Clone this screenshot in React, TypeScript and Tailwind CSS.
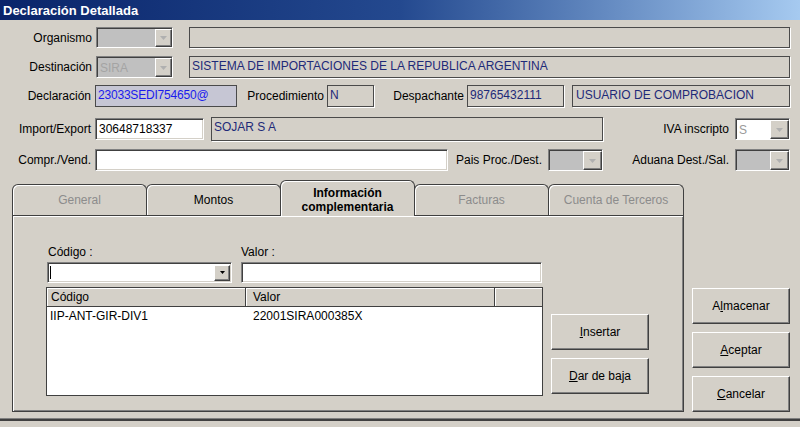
import React from "react";

const sunkenWhite =
  "bg-white border border-t-[#808080] border-l-[#808080] border-b-white border-r-white shadow-[inset_1px_1px_0_#404040,inset_-1px_-1px_0_#d4d0c8]";
const readOnly = "border border-[#4a4a4a] shadow-[1px_1px_0_#ffffff]";
const raised =
  "bg-[#d4d0c8] border border-t-white border-l-white border-b-[#404040] border-r-[#404040] shadow-[inset_-1px_-1px_0_#808080]";

function Arrow({ color }: { color: string }) {
  return (
    <svg width="7" height="4" viewBox="0 0 7 4">
      <path d="M0 0 H7 L3.5 4 Z" fill={color} />
    </svg>
  );
}

function DisabledCombo({
  fieldCls,
  text,
  textCls,
}: {
  fieldCls: string;
  text?: string;
  textCls?: string;
}) {
  return (
    <div className="flex h-full w-[77px] border border-t-[#808080] border-l-[#808080] border-b-white border-r-white shadow-[inset_1px_1px_0_#404040]">
      <div className={`flex-1 flex items-center pl-[2px] ml-[1px] mt-[1px] ${fieldCls} ${textCls ?? ""}`}>{text}</div>
      <div className={`w-[17px] mt-[1px] flex items-center justify-center ${raised}`}>
        <Arrow color="#b0b0b0" />
      </div>
    </div>
  );
}

function SmallCombo({ fieldCls, text, textCls }: { fieldCls: string; text?: string; textCls?: string }) {
  return (
    <div className="flex h-full w-[55px] border border-t-[#808080] border-l-[#808080] border-b-white border-r-white shadow-[inset_1px_1px_0_#404040]">
      <div className={`flex-1 flex items-center pl-[2px] ml-[1px] mt-[1px] ${fieldCls} ${textCls ?? ""}`}>{text}</div>
      <div className={`w-[19px] mt-[1px] flex items-center justify-center ${raised}`}>
        <Arrow color="#b0b0b0" />
      </div>
    </div>
  );
}

function Btn({ children, cls }: { children: React.ReactNode; cls: string }) {
  return (
    <div className={`w-[98px] h-[36px] flex items-center justify-center text-[12px] ${raised} ${cls}`}>
      {children}
    </div>
  );
}

export default function App() {
  const navy = "text-[#1e2a78]";
  return (
    <div className="w-[800px] h-[427px] bg-[#d4d0c8] overflow-hidden text-[12px] leading-none text-black font-['Liberation_Sans',Arial,sans-serif]">
      {/* title bar */}
      <div className="h-[20px] bg-gradient-to-r from-[#0a246a] via-[#24498f] to-[#a6caf0] flex items-center pl-[3px] text-white font-bold text-[13px]">
        Declaración Detallada
      </div>

      {/* row 1 */}
      <div className="flex items-center h-[21px] mt-[7px]">
        <div className="w-[92px] text-right">Organismo</div>
        <div className="ml-[4px] h-full">
          <DisabledCombo fieldCls="bg-[#c0c0c0]" />
        </div>
        <div className={`ml-[16px] w-[601px] h-full ${readOnly}`} />
      </div>

      {/* row 2 */}
      <div className="flex items-center h-[22px] mt-[8px]">
        <div className="w-[92px] text-right">Destinación</div>
        <div className="ml-[4px] h-full">
          <DisabledCombo fieldCls="bg-[#c0c0c0]" text="SIRA" textCls="text-[#a4a4a4]" />
        </div>
        <div className={`ml-[16px] w-[601px] h-full flex items-start pt-[3px] pl-[2px] ${readOnly} ${navy}`}>
          SISTEMA DE IMPORTACIONES DE LA REPUBLICA ARGENTINA
        </div>
      </div>

      {/* row 3 */}
      <div className="flex items-center h-[22px] mt-[7px]">
        <div className="w-[91px] text-right">Declaración</div>
        <div className="ml-[4px] w-[142px] h-full flex items-start pt-[3px] pl-[2px] bg-[#c6c6d4] border border-[#4a4a4a] text-[#1a1aee] tracking-[-0.2px]">
          23033SEDI754650@
        </div>
        <div className="w-[87px] text-right">Procedimiento</div>
        <div className={`ml-[3px] w-[47px] h-full flex items-start pt-[3px] pl-[2px] ${readOnly} ${navy}`}>N</div>
        <div className="w-[90px] text-right">Despachante</div>
        <div className={`ml-[3px] w-[97px] h-full flex items-start pt-[3px] pl-[2px] ${readOnly} ${navy}`}>98765432111</div>
        <div className={`ml-[8px] w-[218px] h-full flex items-start pt-[3px] pl-[3px] ${readOnly} ${navy}`}>
          USUARIO DE COMPROBACION
        </div>
      </div>

      {/* row 4 */}
      <div className="flex items-center h-[22px] mt-[11px]">
        <div className="w-[91px] text-right">Import/Export</div>
        <div className={`ml-[4px] w-[109px] h-full flex items-center pl-[3px] ${sunkenWhite}`}>30648718337</div>
        <div className={`ml-[7px] w-[392px] h-[24px] flex items-start pt-[3px] pl-[2px] ${readOnly} ${navy}`}>SOJAR S A</div>
        <div className="w-[126px] text-right">IVA inscripto</div>
        <div className="ml-[6px] h-full">
          <SmallCombo fieldCls="bg-white" text="S" textCls="text-[#9a9a9a]" />
        </div>
      </div>

      {/* row 5 */}
      <div className="flex items-center h-[22px] mt-[9px]">
        <div className="w-[91px] text-right">Compr./Vend.</div>
        <div className={`ml-[4px] w-[353px] h-full ${sunkenWhite}`} />
        <div className="w-[94px] text-right">Pais Proc./Dest.</div>
        <div className="ml-[6px] h-full">
          <SmallCombo fieldCls="bg-[#c0c0c0]" />
        </div>
        <div className="w-[126px] text-right">Aduana Dest./Sal.</div>
        <div className="ml-[6px] h-full">
          <SmallCombo fieldCls="bg-[#c0c0c0]" />
        </div>
      </div>

      {/* lower area */}
      <div className="flex items-end mt-[10px]">
        <div className="ml-[12px] w-[672px] flex flex-col">
          {/* tabs */}
          <div className="flex items-end h-[34px]">
            <div className="w-[135px] h-[31px] border border-b-0 border-[#404040] rounded-t-[6px] shadow-[inset_1px_1px_0_#ffffff] flex items-center justify-center text-[#8c8c8c]">
              General
            </div>
            <div className="-ml-[1px] w-[135px] h-[31px] border border-b-0 border-[#404040] rounded-t-[6px] shadow-[inset_1px_1px_0_#ffffff] flex items-center justify-center">
              Montos
            </div>
            <div className="-ml-[1px] relative z-10 -mb-[1px] w-[135px] h-[36px] bg-[#d4d0c8] border border-b-0 border-[#404040] rounded-t-[6px] shadow-[inset_1px_1px_0_#ffffff] flex flex-col items-center justify-start pt-[5px] font-bold text-[12px] leading-[14px]">
              <span>Información</span>
              <span>complementaria</span>
            </div>
            <div className="-ml-[1px] w-[135px] h-[31px] border border-b-0 border-[#404040] rounded-t-[6px] shadow-[inset_1px_1px_0_#ffffff] flex items-center justify-center text-[#8c8c8c]">
              Facturas
            </div>
            <div className="-ml-[1px] w-[136px] h-[31px] border border-b-0 border-[#404040] rounded-t-[6px] shadow-[inset_1px_1px_0_#ffffff] flex items-center justify-center text-[#8c8c8c]">
              Cuenta de Terceros
            </div>
          </div>
          {/* panel */}
          <div className="w-[672px] h-[197px] border border-[#404040] shadow-[inset_1px_1px_0_#ffffff,inset_-1px_-1px_0_#808080] flex items-start">
            <div className="ml-[33px] w-[497px] pt-[29px] flex flex-col">
              <div className="flex h-[14px] items-center">
                <span className="ml-[2px] w-[193px]">Código :</span>
                <span>Valor :</span>
              </div>
              <div className="flex h-[21px] mt-[3px]">
                <div className={`ml-[1px] w-[185px] h-full flex items-center ${sunkenWhite}`}>
                  <div className="ml-[2px] w-[1px] h-[13px] bg-black" />
                  <div className={`ml-auto mr-[1px] w-[16px] h-[16px] flex items-center justify-center ${raised}`}>
                    <svg width="5" height="3" viewBox="0 0 5 3">
                      <path d="M0 0 H5 L2.5 3 Z" fill="#000" />
                    </svg>
                  </div>
                </div>
                <div className={`ml-[9px] w-[301px] h-full ${sunkenWhite}`} />
              </div>
              <div className="mt-[4px] w-[497px] h-[109px] bg-white border border-[#404040] flex flex-col">
                <div className="flex h-[19px]">
                  <div className="w-[199px] h-full bg-[#d4d0c8] border-r border-b border-[#404040] shadow-[inset_1px_1px_0_#ffffff] flex items-center pl-[4px]">
                    Código
                  </div>
                  <div className="w-[249px] h-full bg-[#d4d0c8] border-r border-b border-[#404040] shadow-[inset_1px_1px_0_#ffffff] flex items-center pl-[7px]">
                    Valor
                  </div>
                  <div className="flex-1 h-full bg-[#d4d0c8] border-b border-[#404040] shadow-[inset_1px_1px_0_#ffffff]" />
                </div>
                <div className="flex h-[17px] items-center">
                  <span className="w-[206px] pl-[3px]">IIP-ANT-GIR-DIV1</span>
                  <span>22001SIRA000385X</span>
                </div>
              </div>
            </div>
            <div className="ml-[8px] pt-[98px] flex flex-col gap-[8px]">
              <Btn cls="">
                <span>
                  <span className="underline">I</span>nsertar
                </span>
              </Btn>
              <Btn cls="">
                <span>
                  <span className="underline">D</span>ar de baja
                </span>
              </Btn>
            </div>
          </div>
        </div>
        <div className="ml-[8px] flex flex-col gap-[8px]">
          <Btn cls="">
            <span>
              A<span className="underline">l</span>macenar
            </span>
          </Btn>
          <Btn cls="">
            <span>
              <span className="underline">A</span>ceptar
            </span>
          </Btn>
          <Btn cls="">
            <span>
              <span className="underline">C</span>ancelar
            </span>
          </Btn>
        </div>
      </div>

      {/* window bottom edge */}
      <div className="mt-[6px] h-[1px] bg-[#808080]" />
      <div className="h-[2px] bg-[#404040]" />
    </div>
  );
}
